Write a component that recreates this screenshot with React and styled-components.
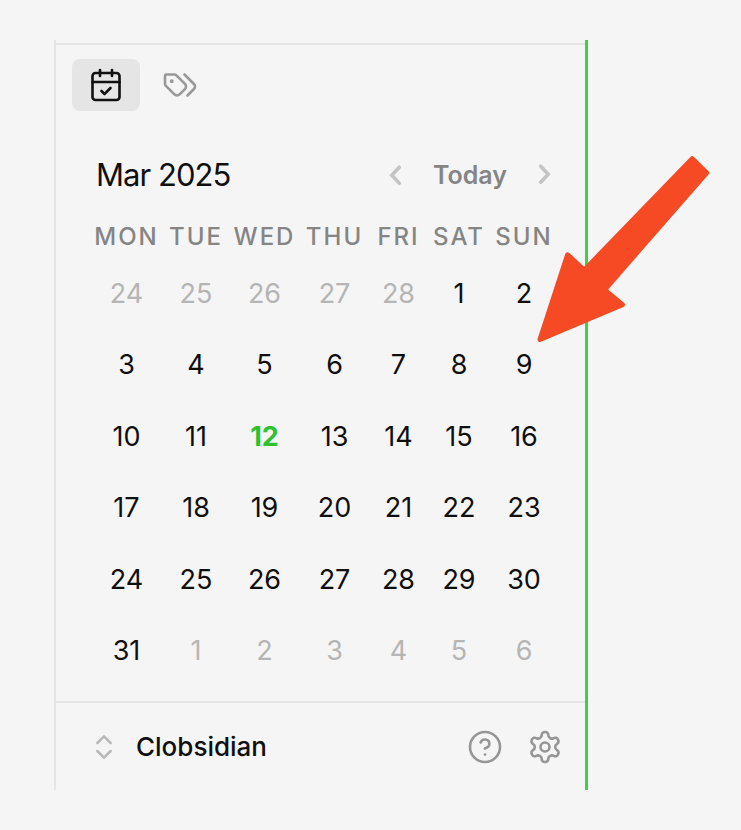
import React from "react";
import styled, { createGlobalStyle } from "styled-components";
import { CalendarCheck, ChevronsUpDown, CircleHelp } from "lucide-react";

const GlobalStyle = createGlobalStyle`
  *, *::before, *::after { box-sizing: border-box; }
  body { margin: 0; background: #f5f5f5; }
  button { border: 0; padding: 0; margin: 0; background: none; font: inherit; color: inherit; }
`;

const Page = styled.main`
  position: relative;
  width: 741px;
  height: 830px;
  padding: 40px 0 0 54px;
  background: #f5f5f5;
  font-family: Inter, "Liberation Sans", sans-serif;
  color: #0f0f0f;
`;

const Sidebar = styled.aside`
  display: flex;
  flex-direction: column;
  width: 534px;
  height: 750px;
  padding-top: 3px;
  border-left: 2px solid #e5e5e5;
  border-right: 3px solid #3dd143;
`;

const TabBar = styled.nav`
  display: flex;
  gap: 6px;
  height: 84px;
  padding: 14px 16px 0;
  border-top: 2px solid #e5e5e5;
`;

const Tab = styled.button`
  display: flex;
  align-items: center;
  justify-content: center;
  width: 68px;
  height: 52px;
  border-radius: 8px;
  background: ${(p) => (p.$active ? "#e5e5e5" : "transparent")};
  color: ${(p) => (p.$active ? "#111" : "#999")};
`;

const CalendarHeader = styled.header`
  display: flex;
  align-items: center;
  height: 44px;
  margin-top: 26px;
  padding: 0 33px 0 40px;
`;

const Month = styled.h1`
  flex: 1;
  margin: 0;
  font-size: 31px;
  font-weight: 400;
  line-height: 44px;
  letter-spacing: -0.95px;
  white-space: nowrap;
`;

const MonthNav = styled.div`
  display: flex;
  align-items: center;
  color: #c4c4c4;
`;

const NavButton = styled.button`
  display: flex;
  width: 14px;
  height: 22px;
`;

const TodayButton = styled.button`
  width: 136px;
  text-align: center;
  font-size: 25px;
  font-weight: 600;
  line-height: 44px;
  color: #858585;
`;

const Grid = styled.div`
  display: grid;
  grid-template-columns: 75px 64px 73px 67px 61px 60px 70px;
  grid-template-rows: 40px repeat(6, 71.4px);
  height: 469px;
  margin: 20px 0 0 33px;
  text-align: center;
`;

const Weekday = styled.div`
  display: flex;
  justify-content: center;
  font-size: 24px;
  font-weight: 500;
  line-height: 40px;
  letter-spacing: 2px;
  white-space: nowrap;
  color: #858585;
`;

const Day = styled.div`
  padding-top: 1px;
  font-size: 27px;
  font-weight: ${(p) => (p.$today ? 700 : 400)};
  line-height: 71.4px;
  color: ${(p) => (p.$today ? "#2dc22d" : p.$muted ? "#b5b5b5" : "#0f0f0f")};
`;

const VaultBar = styled.footer`
  display: flex;
  align-items: center;
  height: 89px;
  margin-top: 15px;
  padding: 0 22px 0 32px;
  border-top: 2px solid #e5e5e5;
`;

const VaultSwitch = styled.button`
  display: flex;
  align-items: center;
  gap: 16px;
  flex: 1;
  color: #b8b8b8;
`;

const VaultName = styled.span`
  font-size: 26px;
  font-weight: 500;
  line-height: 36px;
  color: #0f0f0f;
`;

const Actions = styled.div`
  display: flex;
  gap: 24px;
  color: #969696;
`;

const ActionButton = styled.button`
  display: flex;
`;

const Pointer = styled.svg`
  position: absolute;
  top: 145px;
  left: 528px;
`;

const weekdays = ["MON", "TUE", "WED", "THU", "FRI", "SAT", "SUN"];
const LEADING = 5;
const days = Array.from({ length: 42 }, (_, i) => {
  if (i < LEADING) return { n: 24 + i, muted: true };
  const n = i - LEADING + 1;
  return n > 31 ? { n: n - 31, muted: true } : { n, muted: false };
});

function Chevron({ d }) {
  return (
    <svg width="14" height="22" viewBox="0 0 14 22" fill="none" stroke="currentColor" strokeWidth="3.6" strokeLinecap="round" strokeLinejoin="miter">
      <path d={d} />
    </svg>
  );
}

function Icon({ children }) {
  return (
    <svg width="36" height="36" viewBox="0 0 24 24" fill="none" stroke="currentColor" strokeWidth="1.75" strokeLinecap="round" strokeLinejoin="round">
      {children}
    </svg>
  );
}

function TagsIcon() {
  return (
    <Icon>
      <path d="m15 5 6.3 6.3a2.4 2.4 0 0 1 0 3.4L17 19" />
      <path d="M9.586 5.586A2 2 0 0 0 8.172 5H3a1 1 0 0 0-1 1v5.172a2 2 0 0 0 .586 1.414L8.29 18.29a2.426 2.426 0 0 0 3.42 0l3.58-3.58a2.426 2.426 0 0 0 0-3.42z" />
      <circle cx="6.5" cy="9.5" r=".5" fill="currentColor" />
    </Icon>
  );
}

function GearIcon() {
  return (
    <Icon>
      <path d="M12.22 2h-.44a2 2 0 0 0-2 2v.18a2 2 0 0 1-1 1.73l-.43.25a2 2 0 0 1-2 0l-.15-.08a2 2 0 0 0-2.73.73l-.22.38a2 2 0 0 0 .73 2.73l.15.1a2 2 0 0 1 1 1.72v.51a2 2 0 0 1-1 1.74l-.15.09a2 2 0 0 0-.73 2.73l.22.38a2 2 0 0 0 2.73.73l.15-.08a2 2 0 0 1 2 0l.43.25a2 2 0 0 1 1 1.73V20a2 2 0 0 0 2 2h.44a2 2 0 0 0 2-2v-.18a2 2 0 0 1 1-1.73l.43-.25a2 2 0 0 1 2 0l.15.08a2 2 0 0 0 2.73-.73l.22-.39a2 2 0 0 0-.73-2.73l-.15-.08a2 2 0 0 1-1-1.74v-.5a2 2 0 0 1 1-1.74l.15-.09a2 2 0 0 0 .73-2.73l-.22-.38a2 2 0 0 0-2.73-.73l-.15.08a2 2 0 0 1-2 0l-.43-.25a2 2 0 0 1-1-1.73V4a2 2 0 0 0-2-2z" />
      <circle cx="12" cy="12" r="3" />
    </Icon>
  );
}

export default function App() {
  return (
    <>
      <GlobalStyle />
      <Page>
        <Sidebar>
          <TabBar>
            <Tab $active aria-label="Calendar">
              <CalendarCheck size={36} strokeWidth={1.75} />
            </Tab>
            <Tab aria-label="Tags">
              <TagsIcon />
            </Tab>
          </TabBar>
          <CalendarHeader>
            <Month>Mar 2025</Month>
            <MonthNav>
              <NavButton aria-label="Previous month">
                <Chevron d="M11.3 3.2 3.8 11.2 11.3 19.2" />
              </NavButton>
              <TodayButton>Today</TodayButton>
              <NavButton aria-label="Next month">
                <Chevron d="M2.7 2.2 10.2 10.2 2.7 18.2" />
              </NavButton>
            </MonthNav>
          </CalendarHeader>
          <Grid>
            {weekdays.map((w) => (
              <Weekday key={w}>{w}</Weekday>
            ))}
            {days.map((d, i) => (
              <Day key={i} $muted={d.muted} $today={!d.muted && d.n === 12}>
                {d.n}
              </Day>
            ))}
          </Grid>
          <VaultBar>
            <VaultSwitch>
              <ChevronsUpDown size={32} strokeWidth={1.9} />
              <VaultName>Clobsidian</VaultName>
            </VaultSwitch>
            <Actions>
              <ActionButton aria-label="Help">
                <CircleHelp size={36} strokeWidth={1.75} />
              </ActionButton>
              <ActionButton aria-label="Settings">
                <GearIcon />
              </ActionButton>
            </Actions>
          </VaultBar>
        </Sidebar>
        <Pointer width="190" height="205" viewBox="528 145 190 205" fill="#f54a24" stroke="#f54a24" strokeWidth="5" strokeLinejoin="round" aria-hidden="true">
          <path d="M540 339.5 567.6 254.8 582.5 268.6Q584.2 270 586 268.4L692.2 158.7 706.6 172.8 606.5 287.5Q604.6 290 607 292L622.4 304.6Z" />
        </Pointer>
      </Page>
    </>
  );
}
